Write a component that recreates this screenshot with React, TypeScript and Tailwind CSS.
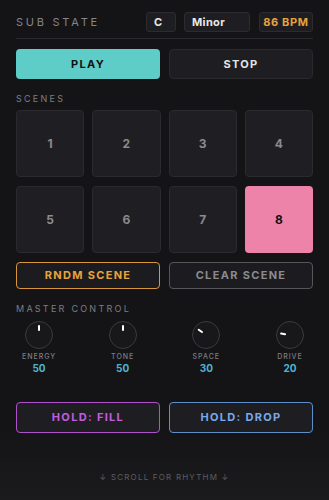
import React from "react";

const knobs = [
  { label: "ENERGY", value: 50 },
  { label: "TONE", value: 50 },
  { label: "SPACE", value: 30 },
  { label: "DRIVE", value: 20 },
];

function Knob({ label, value }: { label: string; value: number }) {
  const angle = (value - 50) * 2.7;
  return (
    <div className="w-[46px] flex flex-col items-center">
      <div className="relative w-[28px] h-[28px] rounded-full bg-[#18181b] border-[1.5px] border-[#3a3a3f]">
        <div className="absolute inset-0" style={{ transform: `rotate(${angle}deg)` }}>
          <div className="absolute left-1/2 top-[3px] -ml-px w-[2px] h-[6px] rounded-sm bg-white" />
        </div>
      </div>
      <div className="mt-[3px] text-[7px] leading-[10px] tracking-[0.14em] text-[#7d7d84] font-medium">{label}</div>
      <div className="text-[10px] leading-[12px] font-bold text-[#4fb3d1]">{value}</div>
    </div>
  );
}

export default function App() {
  return (
    <div className="w-[329px] h-[500px] overflow-hidden bg-[linear-gradient(to_bottom,#141416_0%,#141416_85%,#1b1b1e_100%)] px-4 pt-3 font-['Inter',sans-serif]">
      <div className="flex items-center h-5">
        <div className="flex-1 text-[11px] tracking-[0.25em] text-[#85858b] font-normal">SUB STATE</div>
        <div className="w-[30px] h-5 rounded-[3px] bg-[#1e1e22] border border-[#2b2b30] flex items-center pl-[7px] text-[11px] font-bold text-[#e8e8ea]">C</div>
        <div className="ml-2 w-[66px] h-5 rounded-[3px] bg-[#1e1e22] border border-[#2b2b30] flex items-center pl-[7px] text-[11px] font-bold tracking-[0.03em] text-[#e8e8ea]">Minor</div>
        <div className="ml-[9px] w-[54px] h-5 rounded-[3px] bg-[#1e1e22] border border-[#2b2b30] flex items-center justify-center text-[11px] font-bold tracking-[0.06em] text-[#e8a33d]">86 BPM</div>
      </div>
      <div className="mt-[6px] h-px bg-[#2a2a2e]" />
      <div className="mt-[10px] grid grid-cols-2 gap-[9px]">
        <div className="h-[30px] rounded-[4px] bg-[#5ecdc7] flex items-center justify-center text-[11px] font-bold tracking-[0.12em] text-[#111113]">PLAY</div>
        <div className="h-[30px] rounded-[4px] bg-[#1e1e22] border border-[#2a2a2e] flex items-center justify-center text-[11px] font-bold tracking-[0.12em] text-[#e4e4e6]">STOP</div>
      </div>
      <div className="mt-[14px] text-[9px] leading-[12px] tracking-[0.25em] text-[#7d7d84]">SCENES</div>
      <div className="mt-[5px] grid grid-cols-4 gap-x-[8px] gap-y-[9px]">
        {[1, 2, 3, 4, 5, 6, 7, 8].map((n) =>
          n === 8 ? (
            <div key={n} className="h-[67px] rounded-[4px] bg-[#ee83a9] flex items-center justify-center text-[12px] font-bold text-[#111113]">{n}</div>
          ) : (
            <div key={n} className="h-[67px] rounded-[4px] bg-[#1f1f23] border border-[#2a2a2f] flex items-center justify-center text-[12px] font-bold text-[#8a8a90]">{n}</div>
          )
        )}
      </div>
      <div className="mt-[9px] grid grid-cols-2 gap-[9px]">
        <div className="h-[27px] rounded-[4px] bg-[#1c1c20] border border-[#d9953a] flex items-center justify-center text-[11px] font-bold tracking-[0.12em] text-[#e8a33d]">RNDM SCENE</div>
        <div className="h-[27px] rounded-[4px] bg-[#1c1c20] border border-[#55555b] flex items-center justify-center text-[11px] font-bold tracking-[0.12em] text-[#8a8a90]">CLEAR SCENE</div>
      </div>
      <div className="mt-[14px] text-[9px] leading-[12px] tracking-[0.25em] text-[#7d7d84]">MASTER CONTROL</div>
      <div className="mt-[6px] flex justify-between">
        {knobs.map((k) => (
          <Knob key={k.label} label={k.label} value={k.value} />
        ))}
      </div>
      <div className="mt-[28px] grid grid-cols-2 gap-[9px]">
        <div className="h-[31px] rounded-[4px] bg-[#1e1e22] border border-[#b052cc] flex items-center justify-center text-[11px] font-bold tracking-[0.12em] text-[#c25ce0]">HOLD: FILL</div>
        <div className="h-[31px] rounded-[4px] bg-[#1e1e22] border border-[#5d8fc9] flex items-center justify-center text-[11px] font-bold tracking-[0.12em] text-[#78aaeb]">HOLD: DROP</div>
      </div>
      <div className="mt-[38px] text-center text-[8px] leading-[12px] tracking-[0.15em] text-[#5c5c62]">↓ SCROLL FOR RHYTHM ↓</div>
    </div>
  );
}
